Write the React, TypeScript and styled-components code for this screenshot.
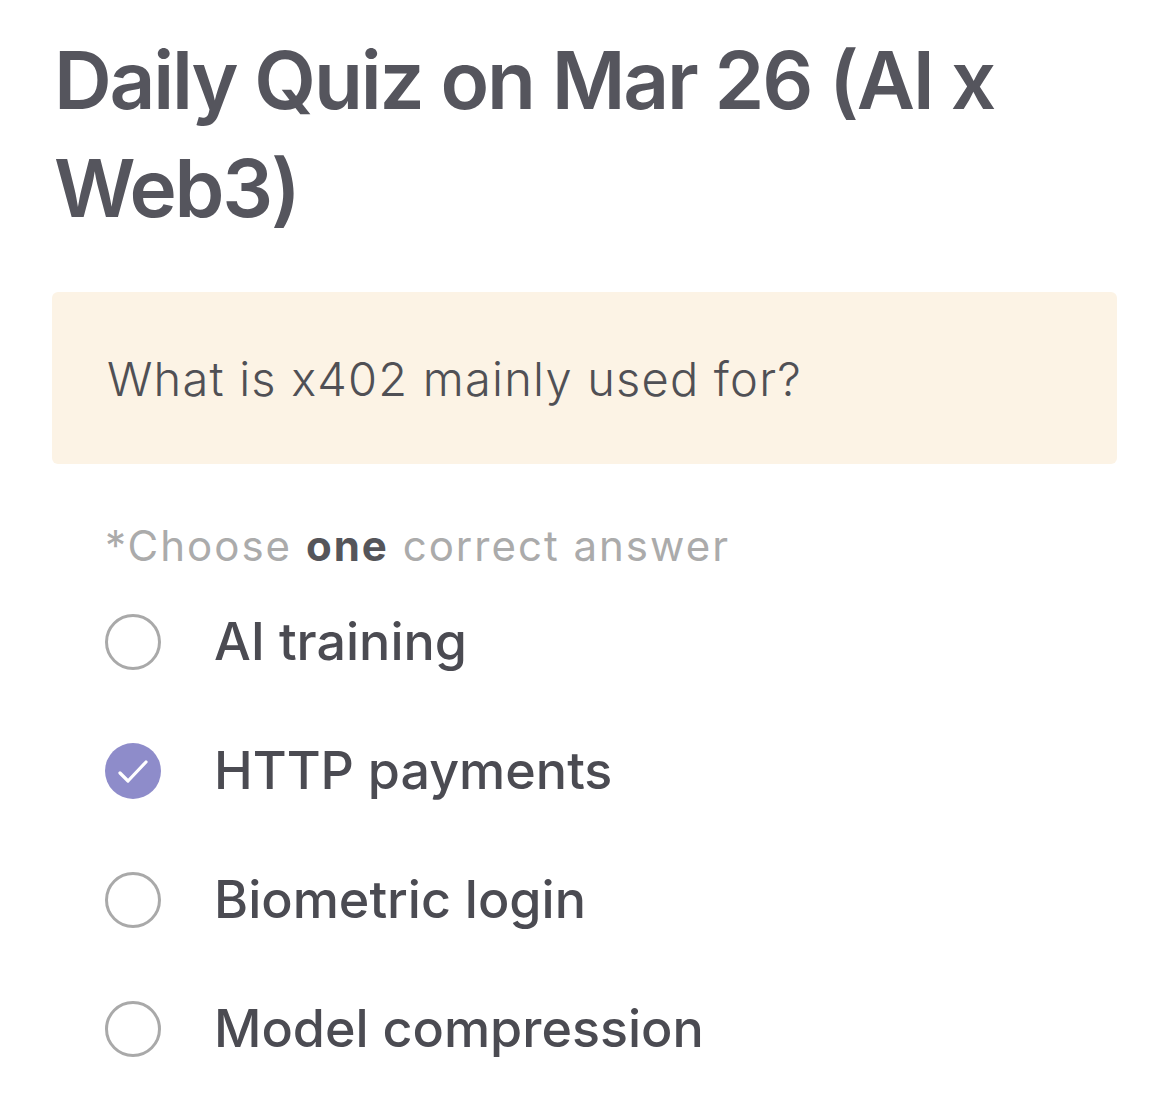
import React, { useState } from "react";
import styled, { createGlobalStyle } from "styled-components";

const GlobalStyle = createGlobalStyle`
  html, body {
    margin: 0;
    padding: 0;
    background: #ffffff;
  }
  body {
    font-family: Inter, "Noto Sans", sans-serif;
  }
`;

const Page = styled.div`
  display: flex;
  flex-direction: column;
  padding: 26px 53px 40px 52px;
  width: 1065px;
`;

const Title = styled.h1`
  margin: 0 0 0 2px;
  font-size: 80px;
  line-height: 108px;
  font-weight: 600;
  color: #55555d;
  letter-spacing: -2.2px;
`;

const QuestionBox = styled.div`
  margin-top: 50px;
  display: flex;
  align-items: center;
  height: 172px;
  padding: 0 55px;
  background: #fcf3e5;
  border-radius: 6px;
`;

const QuestionText = styled.span`
  font-size: 47px;
  font-weight: 300;
  color: #505055;
  letter-spacing: 1.2px;
`;

const Hint = styled.div`
  margin: 58px 0 0 53px;
  font-size: 42px;
  font-weight: 400;
  color: #ababab;
  line-height: 48px;
  letter-spacing: 2px;

  b {
    font-weight: 700;
    color: #55555a;
  }
`;

const OptionList = styled.div`
  display: flex;
  flex-direction: column;
  margin: 7px 0 0 53px;
`;

const Option = styled.label`
  display: flex;
  align-items: center;
  gap: 53px;
  height: 129px;
  cursor: pointer;
`;

const Radio = styled.span<{ $checked: boolean }>`
  box-sizing: border-box;
  width: 56px;
  height: 56px;
  border-radius: 50%;
  flex-shrink: 0;
  display: flex;
  align-items: center;
  justify-content: center;
  border: ${(p) => (p.$checked ? "none" : "3px solid #a9a9a9")};
  background: ${(p) => (p.$checked ? "#8e8cca" : "transparent")};
`;

const OptionText = styled.span`
  font-size: 52px;
  font-weight: 500;
  color: #4b4b52;
`;

const options = ["AI training", "HTTP payments", "Biometric login", "Model compression"];

const App = () => {
  const [selected, setSelected] = useState(1);

  return (
    <>
      <GlobalStyle />
      <Page>
        <Title>Daily Quiz on Mar 26 (AI x Web3)</Title>
        <QuestionBox>
          <QuestionText>What is x402 mainly used for?</QuestionText>
        </QuestionBox>
        <Hint>
          *Choose <b>one</b> correct answer
        </Hint>
        <OptionList>
          {options.map((o, i) => (
            <Option key={o} onClick={() => setSelected(i)}>
              <Radio $checked={selected === i}>
                {selected === i && (
                  <svg width="56" height="56" viewBox="0 0 56 56" fill="none">
                    <path
                      d="M15 30l8 8L41 19"
                      stroke="#ffffff"
                      strokeWidth="3.2"
                      strokeLinecap="round"
                      strokeLinejoin="round"
                    />
                  </svg>
                )}
              </Radio>
              <OptionText>{o}</OptionText>
            </Option>
          ))}
        </OptionList>
      </Page>
    </>
  );
};

export default App;
